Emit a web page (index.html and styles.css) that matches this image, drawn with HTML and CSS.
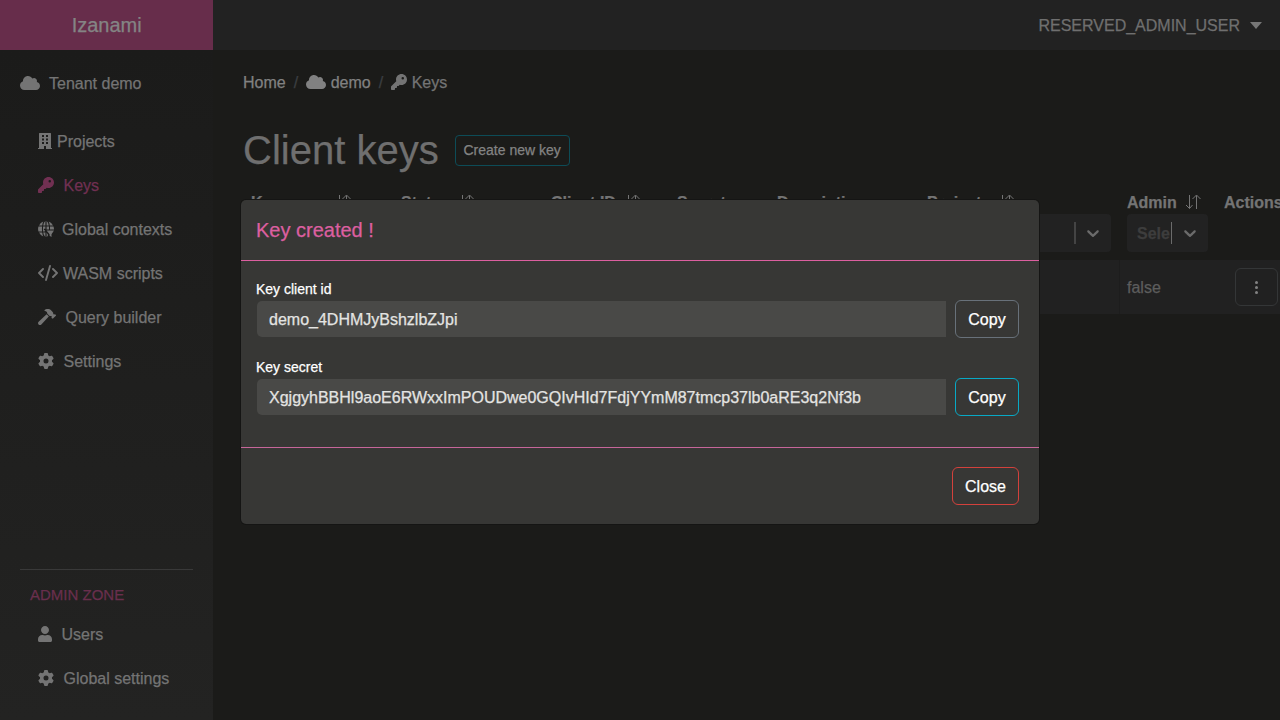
FILE: index.html
```
<!DOCTYPE html>
<html lang="en">
<head>
<meta charset="utf-8">
<title>Izanami</title>
<link rel="stylesheet" href="styles.css">
</head>
<body>
<svg class="defs" width="0" height="0">
  <symbol id="cloud" viewBox="0 0 640 512"><path d="M0 336c0 79.5 64.5 144 144 144H512c70.7 0 128-57.3 128-128c0-61.9-44-113.6-102.4-125.4c4.1-10.7 6.4-22.4 6.4-34.6c0-53-43-96-96-96c-19.7 0-38.1 6-53.3 16.2C367 64.2 315.3 32 256 32C167.6 32 96 103.6 96 192c0 2.7 .1 5.4 .2 8.1C40.2 219.8 0 273.2 0 336z"/></symbol>
  <symbol id="key" viewBox="0 0 512 512"><path d="M336 352c97.2 0 176-78.8 176-176S433.2 0 336 0S160 78.8 160 176c0 18.7 2.9 36.8 8.3 53.7L7 391c-4.5 4.5-7 10.6-7 17v80c0 13.3 10.7 24 24 24h80c13.3 0 24-10.7 24-24V448h40c13.3 0 24-10.7 24-24V384h40c6.4 0 12.5-2.5 17-7l33.3-33.3c16.9 5.4 35 8.3 53.7 8.3zM376 96a40 40 0 1 1 0 80 40 40 0 1 1 0-80z"/></symbol>
  <symbol id="gear" viewBox="0 0 512 512"><path d="M495.9 166.6c3.2 8.7 .5 18.4-6.4 24.6l-43.3 39.4c1.1 8.3 1.7 16.8 1.7 25.4s-.6 17.1-1.7 25.4l43.3 39.4c6.9 6.2 9.6 15.9 6.4 24.6c-4.4 11.9-9.7 23.3-15.8 34.3l-4.7 8.1c-6.6 11-14 21.4-22.1 31.2c-5.9 7.2-15.7 9.6-24.5 6.8l-55.7-17.7c-13.4 10.3-28.2 18.9-44 25.4l-12.5 57.1c-2 9.1-9 16.3-18.2 17.8c-13.8 2.3-28 3.5-42.5 3.5s-28.7-1.2-42.5-3.5c-9.2-1.5-16.2-8.7-18.2-17.8l-12.5-57.1c-15.8-6.5-30.6-15.1-44-25.4L83.1 425.9c-8.8 2.8-18.6 .3-24.5-6.8c-8.1-9.8-15.5-20.2-22.1-31.2l-4.7-8.1c-6.1-11-11.4-22.4-15.8-34.3c-3.2-8.7-.5-18.4 6.4-24.6l43.3-39.4C64.6 273.1 64 264.6 64 256s.6-17.1 1.7-25.4L22.4 191.2c-6.9-6.2-9.6-15.9-6.4-24.6c4.4-11.9 9.7-23.3 15.8-34.3l4.7-8.1c6.6-11 14-21.4 22.1-31.2c5.9-7.2 15.7-9.6 24.5-6.8l55.7 17.7c13.4-10.3 28.2-18.9 44-25.4l12.5-57.1c2-9.1 9-16.3 18.2-17.8C227.3 1.2 241.5 0 256 0s28.7 1.2 42.5 3.5c9.2 1.5 16.2 8.7 18.2 17.8l12.5 57.1c15.8 6.5 30.6 15.1 44 25.4l55.7-17.7c8.8-2.8 18.6-.3 24.5 6.8c8.1 9.8 15.5 20.2 22.1 31.2l4.7 8.1c6.1 11 11.4 22.4 15.8 34.3zM256 336a80 80 0 1 0 0-160 80 80 0 1 0 0 160z"/></symbol>
  <symbol id="user" viewBox="0 0 448 512"><path d="M224 256c70.7 0 128-57.3 128-128S294.7 0 224 0 96 57.3 96 128s57.3 128 128 128zm89.600 32h-16.700c-22.200 10.200-46.900 16-72.900 16s-50.600-5.800-72.900-16h-16.700C60.200 288 0 348.200 0 422.400V464c0 26.500 21.500 48 48 48h352c26.500 0 48-21.500 48-48v-41.600c0-74.200-60.200-134.400-134.400-134.400z"/></symbol>
  <symbol id="hammer" viewBox="0 0 576 512"><path d="M571.310 193.940l-22.630-22.630c-6.250-6.250-16.380-6.250-22.630 0l-11.310 11.310-28.900-28.900c5.630-21.310.36-44.900-16.350-61.610l-45.250-45.250c-62.480-62.480-163.790-62.480-226.280 0l90.510 45.250v18.750c0 16.970 6.740 33.250 18.750 45.250l49.140 49.140c16.710 16.710 40.300 21.980 61.610 16.350l28.900 28.900-11.310 11.310c-6.250 6.250-6.250 16.380 0 22.630l22.630 22.630c6.250 6.250 16.380 6.250 22.630 0l90.510-90.510c6.230-6.240 6.230-16.370-.02-22.620zm-286.720-15.200c-3.700-3.700-6.840-7.790-9.850-11.950L19.640 404.960c-25.570 23.880-26.260 64.190-1.530 88.930s65.050 24.050 88.920-1.530l238.130-255.070c-3.960-2.910-7.900-5.870-11.440-9.410l-49.130-49.140z"/></symbol>
  <symbol id="building" viewBox="0 0 14 16"><path fill-rule="evenodd" d="M1 .5Q1 0 1.500 0h11q.5 0 .5.500V15h1v1H8v-3H6v3H0v-1h1zM4 2v2h2V2zm4 0v2h2V2zM4 5.500v2h2v-2zm4 0v2h2v-2zM4 9v2h2V9zm4 0v2h2V9z"/></symbol>
  <symbol id="globe" viewBox="0 0 16 16"><path d="M5.300.5A8 8 0 0 0 1 4.400h3.200Q4.500 2 5.300.5zM7.400 0Q5.600 1.500 5.200 4.400h2.200zM8.600 0v4.400h2.200Q10.400 1.500 8.600 0zM10.700.5q.8 1.500 1.100 3.900H15A8 8 0 0 0 10.700.5zM.5 5.400a8 8 0 0 0 0 5.200h3.600q-.3-2.600 0-5.200zM5.100 5.400q-.3 2.600 0 5.200h1.700V9h-.9V7.800h1.500V5.400zM8.600 5.400v3h2.400V5.400zM12 5.400v3h4q0-1.600-.5-3zM1 11.600a8 8 0 0 0 4.300 3.900q-.8-1.500-1.100-3.900zM5.200 11.600Q5.600 14.500 7.400 16v-4.400zM8.600 9.400H16l-2.500 3.800V16l-1.900-1.300v-1.500zM8.600 11.600V16q1-.7 1.500-2z"/></symbol>
  <symbol id="code" viewBox="0 0 20 16"><path class="line" d="M5 4L1 8l4 4M15 4l4 4-4 4M12 1L8 15"/></symbol>
  <symbol id="sort" viewBox="0 0 16 16"><path class="thin" d="M4.500 1v13.500M1 11l3.500 3.500L7.500 11M11.500 15V1.500M7.500 5l4-4 4 4"/></symbol>
  <symbol id="chevron" viewBox="0 0 20 20"><path d="M4.516 7.548c.436-.446 1.043-.481 1.576 0L10 11.295l3.908-3.747c.533-.481 1.141-.446 1.574 0 .436.445.408 1.197 0 1.615-.406.418-4.695 4.502-4.695 4.502a1.095 1.095 0 0 1-1.576 0S4.924 9.581 4.516 9.163c-.409-.418-.436-1.170 0-1.615z"/></symbol>
</svg>

<header class="topbar">
  <div class="brand">Izanami</div>
  <div class="account">RESERVED_ADMIN_USER <span class="caret"></span></div>
</header>

<div class="shell">
  <aside class="sidebar">
    <div class="tenant"><svg class="w20"><use href="#cloud"/></svg>Tenant demo</div>
    <nav class="menu">
      <a><svg class="w14"><use href="#building"/></svg>Projects</a>
      <a class="active wide"><svg class="w16"><use href="#key"/></svg>Keys</a>
      <a class="mid"><svg class="w16"><use href="#globe"/></svg>Global contexts</a>
      <a><svg class="w20"><use href="#code"/></svg>WASM scripts</a>
      <a class="wide"><svg class="w18"><use href="#hammer"/></svg>Query builder</a>
      <a class="wide"><svg class="w16"><use href="#gear"/></svg>Settings</a>
    </nav>
    <div class="admin">
      <div class="admin-title">ADMIN ZONE</div>
      <nav class="menu">
        <a class="wide"><svg class="w14"><use href="#user"/></svg>Users</a>
        <a class="wide"><svg class="w16"><use href="#gear"/></svg>Global settings</a>
      </nav>
    </div>
  </aside>

  <main class="content">
    <div class="crumbs">
      <span>Home</span><i>/</i><span><svg class="w20"><use href="#cloud"/></svg>demo</span><i>/</i><span class="current"><svg class="w16"><use href="#key"/></svg>Keys</span>
    </div>
    <div class="heading"><h1>Client keys</h1><button class="create">Create new key</button></div>
    <div class="grid head">
      <div>Key name <svg><use href="#sort"/></svg></div>
      <div>Status <svg><use href="#sort"/></svg></div>
      <div>Client ID <svg><use href="#sort"/></svg></div>
      <div>Secret</div>
      <div>Description</div>
      <div>Projects <svg><use href="#sort"/></svg></div>
      <div>Admin <svg><use href="#sort"/></svg></div>
      <div>Actions</div>
    </div>
    <div class="grid filters">
      <div></div><div></div><div></div><div></div><div></div>
      <div><div class="select"><span></span><b class="bar2"></b><svg><use href="#chevron"/></svg></div></div>
      <div><div class="select"><span>Sele</span><b></b><svg><use href="#chevron"/></svg></div></div>
      <div></div>
    </div>
    <div class="grid row">
      <div></div><div></div><div></div><div></div><div></div><div></div>
      <div class="edge">false</div>
      <div class="actions"><button class="dots"><i></i><i></i><i></i></button></div>
    </div>
  </main>
</div>

<section class="modal">
  <div class="modal-title">Key created !</div>
  <div class="modal-body">
    <label>Key client id</label>
    <div class="field"><div class="value">demo_4DHMJyBshzlbZJpi</div><button class="btn gray">Copy</button></div>
    <label>Key secret</label>
    <div class="field"><div class="value">XgjgyhBBHl9aoE6RWxxImPOUDwe0GQIvHId7FdjYYmM87tmcp37lb0aRE3q2Nf3b</div><button class="btn cyan">Copy</button></div>
  </div>
  <div class="modal-footer"><button class="btn red">Close</button></div>
</section>
</body>
</html>
```
FILE: styles.css
```
* { box-sizing: border-box; }
body {
  margin: 0;
  width: 1280px;
  height: 720px;
  overflow: hidden;
  background: #1b1b19;
  color: #747474;
  font: 16px/24px "Liberation Sans", Arial, sans-serif;
  -webkit-text-stroke: 0.25px;
}
svg { fill: currentColor; height: 16px; flex: none; }
.defs { display: block; height: 0; }
button { background: none; font-family: inherit; padding: 0; }
.line { fill: none; stroke: currentColor; stroke-width: 1.900; stroke-linecap: round; stroke-linejoin: round; }
.thin { fill: none; stroke: currentColor; stroke-width: 1; }
.w14 { width: 14px; }
.w16 { width: 16px; }
.w18 { width: 18px; }
.w20 { width: 20px; }

.topbar { display: flex; height: 50px; background: #222; }
.brand { width: 213.400px; background: #672d4b; color: #848484; font-size: 20px; line-height: 50px; text-align: center; }
.account { margin-left: auto; padding: 2px 18px 0 0; display: flex; align-items: center; gap: 10px; color: #6f6f6f; }
.caret { border: 6px solid transparent; border-top: 7px solid #777; border-bottom: 0; margin-bottom: 2px; }

.shell { display: flex; height: 670px; }
.sidebar {
  width: 213px;
  flex: none;
  display: flex;
  flex-direction: column;
  padding: 21px 20px 20px;
  background: linear-gradient(#1b1b1a, #232322);
}
.tenant { display: flex; align-items: center; gap: 9px; height: 24px; padding-top: 2px; margin-bottom: 24px; }
.menu a { display: flex; align-items: center; gap: 5px; height: 44px; padding: 2px 0 0 18px; }
.tenant svg, .menu svg, .crumbs svg { margin-bottom: 2px; }
.menu a.wide { gap: 9.500px; }
.menu a.mid { gap: 8px; }
.menu a.active { color: #713052; }
.admin { margin-top: auto; border-top: 1px solid #393939; padding-top: 14px; }
.admin-title { height: 24px; padding-left: 10px; margin-bottom: 4px; color: #692f4d; font-size: 15px; line-height: 22px; }

.content { flex: none; width: 1067px; overflow: hidden; padding: 20px 0 0 30px; }
.crumbs { display: flex; align-items: center; height: 24px; padding-top: 2px; color: #818181; }
.crumbs span { display: flex; align-items: center; gap: 4.500px; }
.crumbs .current { color: #747474; }
.crumbs i { font-style: normal; color: #3c3f42; margin: 0 8px; }
.heading { display: flex; align-items: center; gap: 16px; height: 48px; margin-top: 32px; }
h1 { margin: 0; font-size: 40px; line-height: 48px; font-weight: 400; color: #6f6f6f; }
.create { width: 115px; height: 31px; border: 1px solid #0d4c57; border-radius: 4px; color: #838383; font-size: 14px; }

.grid { display: grid; grid-template-columns: 150px 150px 126px 100px 150px 200px 97px 100px; width: 1073px; }
.grid > div { padding: 0 8px; }
.grid.head { margin-top: 16px; height: 24px; font-weight: 700; }
.head > div { display: flex; align-items: center; gap: 8px; }
.grid.head > div { padding-top: 1px; }
.head svg { width: 16px; margin-bottom: 2px; }
.filters { height: 46px; }
.select { display: flex; align-items: center; height: 38px; background: #222; border-radius: 4px; padding-right: 8px; font-weight: 700; color: #3d3d3d; }
.select span { flex: 1; padding: 2px 0 0 10px; }
.select b { width: 1px; height: 22px; background: #6b6b6b; margin-right: 8px; }
.select .bar2 { width: 2px; background: #444; margin-right: 7px; }
.select svg { width: 20px; height: 20px; color: #6b6b6b; }
.row { height: 54px; background: #212121; color: #5d5d5d; line-height: 56px; }
.row .edge { border-left: 1px solid #1d1d1d; padding-left: 7px; height: 54px; }
.row .actions { padding: 8px 0 0 19px; height: 54px; }
.dots { display: flex; flex-direction: column; align-items: center; justify-content: center; gap: 2px; width: 43px; height: 38px; border: 1px solid #343637; border-radius: 6px; }
.dots i { width: 3px; height: 3px; border-radius: 50%; background: #828282; }

.modal {
  position: absolute;
  left: 241px;
  top: 200px;
  width: 798px;
  height: 324px;
  background: #373735;
  border-radius: 5px;
  box-shadow: 0 0 0 1px #151514;
  color: #fff;
}
.modal-title { height: 61px; padding-left: 15px; border-bottom: 1px solid #dc5fa0; color: #dc5fa0; font-size: 20px; line-height: 60px; }
.modal-body { height: 187px; padding: 18px 20px 0 15px; border-bottom: 1px solid #c6669a; }
label { display: block; height: 21px; font-size: 14px; line-height: 21px; }
.field { display: flex; align-items: center; height: 38px; margin-bottom: 19px; }
.value { width: 689px; height: 36px; margin-left: 1px; padding-left: 12px; background: #494947; border-radius: 5px 0 0 5px; color: #e4e4e2; line-height: 38px; white-space: nowrap; }
.btn { height: 38px; padding-top: 2px; border: 1px solid; border-radius: 6px; color: #fff; font-size: 16px; }
.field .btn { width: 64px; margin-left: auto; }
.btn.gray { border-color: #68717a; }
.btn.cyan { border-color: #08a9c5; }
.btn.red { border-color: #d3413c; width: 67px; }
.modal-footer { display: flex; justify-content: flex-end; align-items: flex-start; padding: 19px 20px; }
```
